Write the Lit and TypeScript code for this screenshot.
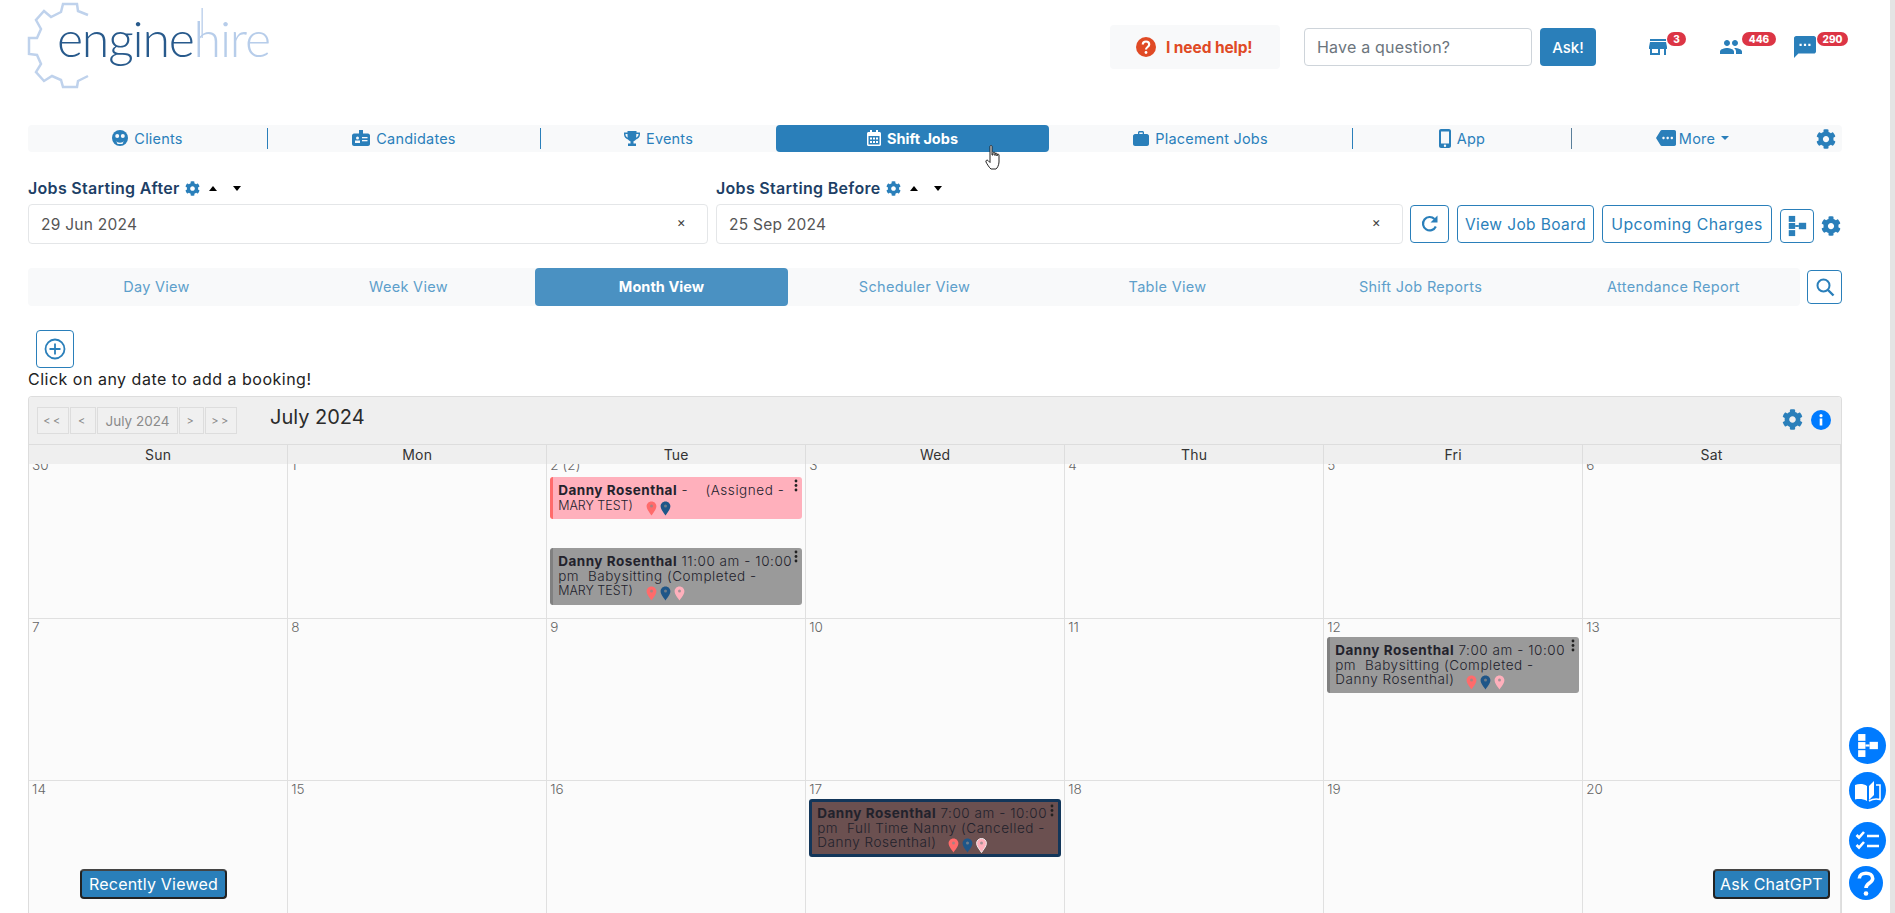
import { LitElement, html, css } from "lit";
import { customElement } from "lit/decorators.js";

const GEAR = "M487.4 315.7l-42.6-24.6c4.3-23.2 4.3-47 0-70.2l42.6-24.6c4.9-2.8 7.1-8.6 5.5-14-11.1-35.6-30-67.8-54.7-94.6-3.8-4.1-10-5.1-14.8-2.3L380.8 110c-17.9-15.4-38.5-27.3-60.8-35.1V25.8c0-5.6-3.9-10.5-9.4-11.7-36.7-8.2-74.3-7.8-109.2 0-5.5 1.2-9.4 6.1-9.4 11.7V75c-22.2 7.9-42.8 19.8-60.8 35.1L88.7 85.5c-4.9-2.8-11-1.9-14.8 2.3-24.7 26.7-43.6 58.9-54.7 94.6-1.7 5.4.6 11.2 5.5 14L67.3 221c-4.3 23.2-4.3 47 0 70.2l-42.6 24.6c-4.9 2.8-7.1 8.6-5.5 14 11.1 35.6 30 67.8 54.7 94.6 3.8 4.1 10 5.1 14.8 2.3l42.6-24.6c17.9 15.4 38.5 27.3 60.8 35.1v49.2c0 5.6 3.9 10.5 9.4 11.7 36.7 8.2 74.3 7.8 109.2 0 5.5-1.2 9.4-6.1 9.4-11.7v-49.2c22.2-7.9 42.8-19.8 60.8-35.1l42.6 24.6c4.9 2.8 11 1.9 14.8-2.3 24.7-26.7 43.6-58.9 54.7-94.6 1.5-5.5-.7-11.3-5.6-14.1zM256 336c-44.1 0-80-35.9-80-80s35.9-80 80-80 80 35.9 80 80-35.9 80-80 80z";

const gear = (s: number, c = "#2a7fba") => html`<svg width=${s} height=${s} viewBox="0 0 512 512"><path fill=${c} d=${GEAR}/></svg>`;

const tree = (s: number, c: string) => html`<svg width=${s} height=${s} viewBox="0 0 24 24"><g fill=${c}><rect x="3" y="1" width="7" height="6.5"/><rect x="3" y="8.7" width="7" height="6.5"/><rect x="3" y="16.5" width="7" height="6.5"/><rect x="10" y="11" width="4" height="2"/><rect x="14" y="8.5" width="8" height="7"/></g></svg>`;

const pin = (c: string, stroke = "none") => html`<svg class="pin" width="11" height="15" viewBox="0 0 11 15"><path fill=${c} stroke=${stroke} d="M5.5.5C2.6.5.6 2.7.6 5.3c0 3.3 3.5 6.8 4.9 9.3 1.4-2.5 4.9-6 4.9-9.3C10.4 2.7 8.4.5 5.5.5z"/><circle cx="5.5" cy="5" r="1.5" fill="#8a8a8a" fill-opacity=".75"/></svg>`;

const kebab = () => html`<svg class="kebab" width="4" height="13" viewBox="0 0 4 13"><g fill="#222"><circle cx="2" cy="2" r="1.4"/><circle cx="2" cy="6.5" r="1.4"/><circle cx="2" cy="11" r="1.4"/></g></svg>`;

const navIcons: Record<string, unknown> = {
  clients: html`<svg width="16" height="16" viewBox="0 0 16 16"><circle cx="8" cy="8" r="8" fill="#2a7fba"/><circle cx="5.2" cy="6" r="2" fill="#f8f9fa"/><circle cx="10.8" cy="6" r="2" fill="#f8f9fa"/><path d="M4 10.5c1 3 7 3 8 0l-1.5 3.5h-5z" fill="#f8f9fa"/></svg>`,
  candidates: html`<svg width="18" height="16" viewBox="0 0 18 16"><path fill="#2a7fba" d="M7 0h4v3.5h5c1 0 2 1 2 2V14c0 1-1 2-2 2H2c-1 0-2-1-2-2V5.5c0-1 1-2 2-2h5z"/><g fill="#f8f9fa"><circle cx="5.5" cy="8" r="1.5"/><rect x="3" y="10.5" width="5" height="2.5"/><rect x="10" y="7" width="5.5" height="1.3"/><rect x="10" y="10" width="5.5" height="1.3"/></g></svg>`,
  events: html`<svg width="16" height="15" viewBox="0 0 16 15"><path fill="#2a7fba" d="M3.5 0h9v1.5H16v2c0 2.5-2 4.5-4 5-.5.7-1.5 1.5-2.5 1.8V12.5H12V15H4v-2.5h2.5V10.3C5.5 10 4.5 9.2 4 8.5c-2-.5-4-2.5-4-5v-2h3.5zM1.5 3v.5c0 1.3.8 2.5 2.2 3.2C3.6 5.3 3.5 4 3.5 3zm13 0h-2.2c0 1-.1 2.3-.2 3.7 1.4-.7 2.4-1.9 2.4-3.2z"/></svg>`,
  shift: html`<svg width="14" height="16" viewBox="0 0 14 16"><path fill="#fff" fill-rule="evenodd" d="M3 0h2v2h4V0h2v2h1.5C13.3 2 14 2.7 14 3.5v11c0 .8-.7 1.5-1.5 1.5h-11C.7 16 0 15.3 0 14.5v-11C0 2.7.7 2 1.5 2H3zM1.5 6v8.5h11V6zM3 7.5h2v2H3zm3 0h2v2H6zm3 0h2v2H9zM3 11h2v2H3zm3 0h2v2H6zm3 0h2v2H9z"/></svg>`,
  placement: html`<svg width="16" height="15" viewBox="0 0 16 15"><path fill="#2a7fba" d="M5 1.5C5 .7 5.7 0 6.5 0h3c.8 0 1.5.7 1.5 1.5V3h3c1 0 2 1 2 2v8c0 1-1 2-2 2H2c-1 0-2-1-2-2V5c0-1 1-2 2-2h3zM6.3 1.5V3h3.4V1.5z"/></svg>`,
  app: html`<svg width="12" height="19" viewBox="0 0 12 19"><path fill="#2a7fba" fill-rule="evenodd" d="M2 0h8c1.1 0 2 .9 2 2v15c0 1.1-.9 2-2 2H2c-1.1 0-2-.9-2-2V2C0 .9.9 0 2 0zm0 2.5v12h8v-12zM6 15.5a1.2 1.2 0 100 2.4 1.2 1.2 0 000-2.4z"/></svg>`,
  more: html`<svg width="20" height="16" viewBox="0 0 24 19"><path fill="#2a7fba" d="M22 0H7C6.3 0 5.8.3 5.4.9L0 9.5l5.4 8.6c.4.6.9.9 1.6.9h15c1.1 0 2-.9 2-2V2c0-1.1-.9-2-2-2zM9 11c-.8 0-1.5-.7-1.5-1.5S8.2 8 9 8s1.5.7 1.5 1.5S9.8 11 9 11zm5 0c-.8 0-1.5-.7-1.5-1.5S13.2 8 14 8s1.5.7 1.5 1.5S14.8 11 14 11zm5 0c-.8 0-1.5-.7-1.5-1.5S18.2 8 19 8s1.5.7 1.5 1.5S19.8 11 19 11z"/></svg>`,
};

const caretUp = html`<span class="caret up"></span>`;
const caretDown = html`<span class="caret down"></span>`;

interface Ev { kind: string; time: string; l2: string; l3: string; pins: string[]; }

const line = (t: string) => (t.startsWith("MARY") ? html`<span class="caps">${t}</span>` : t);

@customElement("app-root")
export class AppRoot extends LitElement {
  static styles = css`
    :host { display: block; position: relative; width: 1895px; height: 913px; overflow: hidden; background: #fff; font-family: Inter, "Liberation Sans", sans-serif; color: #212529; }
    .scroll { position: absolute; right: 0; top: 0; bottom: 0; width: 5px; background: #e4e4e4; }
    .head { display: flex; height: 125px; }
    .logo { margin: 0; width: 280px; height: 92px; }
    .logo text { font-family: Lato, sans-serif; font-weight: 300; font-size: 50px; }
    .hr { display: flex; align-items: flex-start; margin-left: 830px; position: relative; }
    .help { display: flex; align-items: center; gap: 10px; width: 170px; height: 44px; margin-top: 25px; background: #f8f9fa; border-radius: 4px; padding-left: 26px; box-sizing: border-box; color: #e04a25; font-weight: 700; font-size: 15.5px; letter-spacing: -.1px; white-space: nowrap; }
    .q { margin: 28px 0 0 24px; width: 228px; height: 38px; box-sizing: border-box; border: 1px solid #ced4da; border-radius: 4px; padding-left: 12px; display: flex; align-items: center; font-size: 16px; color: #6c757d; letter-spacing: .2px; }
    .ask { margin: 28px 0 0 8px; width: 56px; height: 38px; background: #2a7fba; color: #fff; border-radius: 4px; display: flex; align-items: center; justify-content: center; font-size: 15px; font-weight: 500; }
    .ico { position: relative; margin-top: 37px; display: flex; align-items: center; height: 20px; }
    .ico1 { margin-left: 52px; width: 71px; }
    .ico2 { width: 75px; }
    .badge { position: absolute; top: -5px; height: 14px; background: #dc3545; color: #fff; font-size: 10px; font-weight: 800; border-radius: 8px; display: flex; align-items: center; justify-content: center; }
    .main { padding-left: 28px; width: 1814px; }
    .nav { display: flex; align-items: center; height: 27px; background: #f8f9fa; border-radius: 4px; font-size: 14.5px; color: #2a7fba; }
    .ni { display: flex; align-items: center; justify-content: center; gap: 6px; height: 100%; box-sizing: border-box; padding-bottom: 1px; letter-spacing: .2px; white-space: nowrap; }
    .ni svg { flex: none; }
    .ni.on { background: #2a7fba; color: #fff; font-weight: 700; border-radius: 4px; letter-spacing: 0; }
    .sep { width: 1px; height: 21px; background: #2a7fba; flex: none; }
    .navgear { display: flex; align-items: center; margin-left: 3px; }
    .dcaret { display: inline-block; width: 0; height: 0; border-left: 4px solid transparent; border-right: 4px solid transparent; border-top: 4.5px solid #2a7fba; margin-left: 3px; }
    .dates { display: flex; align-items: flex-end; margin-top: 23px; }
    .dcol { display: flex; flex-direction: column; gap: 3px; margin-right: 8px; }
    .lbl { display: flex; align-items: center; height: 26px; font-size: 16px; font-weight: 600; color: #1d3f66; gap: 5px; letter-spacing: .3px; white-space: nowrap; }
    .caret { display: inline-block; width: 0; height: 0; border-left: 4.5px solid transparent; border-right: 4.5px solid transparent; }
    .caret.up { border-bottom: 5px solid #000; margin-left: 4px; }
    .caret.down { border-top: 5px solid #000; margin-left: 11px; }
    .inp { position: relative; box-sizing: border-box; height: 40px; border: 1px solid #e4e6e8; border-radius: 4px; display: flex; align-items: center; padding-left: 12px; font-size: 15.5px; color: #555; letter-spacing: .25px; }
    .x { position: absolute; right: 21px; top: 9px; font-size: 13.5px; color: #444; }
    .ob { box-sizing: border-box; border: 1px solid #2a7fba; border-radius: 4px; color: #2a7fba; display: flex; align-items: center; justify-content: center; background: #fff; font-size: 15.5px; height: 38px; white-space: nowrap; letter-spacing: .4px; }
    .ob.wide { font-size: 15.8px; letter-spacing: .5px; }
    .bar { display: flex; align-items: flex-end; margin-bottom: 1px; }
    .tabsrow { display: flex; align-items: flex-start; margin-top: 24px; }
    .tabs { display: flex; width: 1772px; height: 38px; background: #f8f9fa; border-radius: 4px; font-size: 14.5px; color: #5d9fcb; }
    .tab { width: 253px; display: flex; align-items: center; justify-content: center; box-sizing: border-box; padding-bottom: 1px; letter-spacing: .3px; white-space: nowrap; }
    .tab:first-child { width: 254px; padding-left: 3px; }
    .tab.on { background: #4a91c2; color: #fff; font-weight: 700; border-radius: 4px; letter-spacing: .05px; }
    .add { margin: 24px 0 0 8px; width: 38px; height: 38px; }
    .hint { font-size: 16px; line-height: 23px; letter-spacing: .5px; color: #222; white-space: nowrap; }
    .cal { margin-top: 5px; border: 1px solid #ddd; border-bottom: none; border-radius: 4px 4px 0 0; width: 1814px; box-sizing: border-box; background: #fbfbfb; overflow: hidden; }
    .tb { height: 47px; background: #efefef; display: flex; align-items: flex-start; position: relative; z-index: 1; }
    .pg { display: flex; margin: 10px 0 0 8px; gap: 1px; }
    .pg div { box-sizing: border-box; height: 27px; border: 1px solid #ddd; display: flex; align-items: center; justify-content: center; font-size: 13.5px; color: #8a8a8a; background: #f0f0f0; white-space: nowrap; }
    .pg .ch { font-size: 11px; letter-spacing: 2.5px; }
    .title { font-size: 20px; color: #2b2b2b; margin: 7px 0 0 33px; line-height: 26px; letter-spacing: 0; }
    .tbr { margin: 12px 10px 0 auto; display: flex; align-items: center; gap: 8px; }
    .dow { display: grid; grid-template-columns: 259.2px 259px 259px 259px 259px 259px 257.8px; height: 20px; background: #efefef; border-top: 1px solid #ddd; box-sizing: border-box; position: relative; z-index: 1; font-size: 14px; color: #333; }
    .dow div { display: flex; align-items: center; justify-content: center; border-right: 1px solid #ddd; letter-spacing: .2px; }
    .grid { display: grid; grid-template-columns: 259.2px 259px 259px 259px 259px 259px 257.8px; grid-auto-rows: 162px; margin-top: -7px; }
    .cell { border-right: 1px solid #e0e0e0; border-bottom: 1px solid #e0e0e0; padding: 3px 2px 0 3px; box-sizing: border-box; min-width: 0; }
    .num { font-size: 13.5px; line-height: 13px; margin: -1px 0 2px; color: #666; font-weight: 300; letter-spacing: .1px; }
    .ev { position: relative; box-sizing: border-box; width: 252px; margin-top: 3px; padding: 6px 0 6px 5px; border-left: 3px solid; border-radius: 3px; font-size: 13.5px; line-height: 14.5px; font-weight: 300; color: #22222c; white-space: nowrap; letter-spacing: .55px; }
    .ev b { font-weight: 700; letter-spacing: .5px; }
    .caps { font-size: 12.5px; letter-spacing: 0; }
    .ev.assigned { background: #ffb0bc; border-color: #ff6b6b; }
    .ev.done { background: #9a9a9a; border-color: #808080; }
    .ev.cancel { background: #6b5050; border: 3px solid #12365a; padding: 4px 0 4px 5px; }
    .num + .ev.assigned { margin-top: 5px; }
    .ev + .ev { margin-top: 29px; }
    .pin { vertical-align: -2px; margin: -4px 0 -4px 3px; }
    .pins { margin-left: 9px; }
    .caps + .pins { margin-left: 10px; }
    .kebab { position: absolute; top: 2px; right: 4px; }
    .float { position: absolute; box-sizing: border-box; height: 30px; border: 2px solid #222; border-top-color: #444; border-radius: 4px; background: #2a7fba; color: #fff; display: flex; align-items: center; justify-content: center; font-size: 16px; letter-spacing: .2px; white-space: nowrap; }
    .fab { position: absolute; left: 1849px; width: 37px; height: 37px; border-radius: 50%; background: #007bff; display: flex; align-items: center; justify-content: center; }
    .cursor { position: absolute; left: 985px; top: 145px; }
  `;

  private ev(name: string, e: Ev) {
    return html`<div class="ev ${e.kind}"><b>${name}</b> ${e.time}<br />${line(e.l2)}${e.l3 ? html`<br />${line(e.l3)}` : ""}<span class="pins">${e.pins.map((c) => pin(c, e.kind === "cancel" && c === "#ffb0bc" ? "#eee" : "none"))}</span>${kebab()}</div>`;
  }

  render() {
    const R = "#ff6b6b", B = "#1f5688", P = "#ffb0bc";
    const nums = [["30","1","2 (2)","3","4","5","6"],["7","8","9","10","11","12","13"],["14","15","16","17","18","19","20"]];
    const events: Record<string, Ev[]> = {
      "2 (2)": [
        { kind: "assigned", time: " -\u00a0\u00a0\u00a0 (Assigned -", l2: "MARY TEST)", l3: "", pins: [R, B] },
        { kind: "done", time: "11:00 am - 10:00", l2: "pm\u00a0 Babysitting (Completed -", l3: "MARY TEST)", pins: [R, B, P] },
      ],
      "12": [{ kind: "done", time: "7:00 am - 10:00", l2: "pm\u00a0 Babysitting (Completed -", l3: "Danny Rosenthal)", pins: [R, B, P] }],
      "17": [{ kind: "cancel", time: "7:00 am - 10:00", l2: "pm\u00a0 Full Time Nanny (Cancelled -", l3: "Danny Rosenthal)", pins: [R, B, P] }],
    };
    return html`
      <div class="head">
        <svg class="logo" viewBox="0 0 280 92">
          <path fill="none" stroke="#bfd2ec" stroke-width="2.5" d="M88 15 L78 11 L77 4 L63 4 L61 12 L51 17 L44 11 L36 20 L41 29 L37 38 L29 38 L29 54 L37 55 L41 64 L36 72 L44 81 L52 76 L61 80 L63 87 L77 87 L78 81 L88 76"/>
          <text x="57" y="57" fill="#285a8c" textLength="214" lengthAdjust="spacing">engine<tspan fill="#b7cdea">hire</tspan></text>
          <rect x="201.5" y="8" width="1.3" height="30" fill="#b7cdea"/>
        </svg>
        <div class="hr">
          <div class="help">
            <svg width="20" height="20" viewBox="0 0 20 20"><circle cx="10" cy="10" r="10" fill="#e04a25"/><path fill="none" stroke="#fff" stroke-width="2.2" d="M6.8 7.5c0-4 6.4-4 6.4 0 0 2.5-3.2 2.5-3.2 5"/><circle cx="10" cy="15.5" r="1.4" fill="#fff"/></svg>
            I need help!
          </div>
          <div class="q">Have a question?</div>
          <div class="ask">Ask!</div>
          <div class="ico ico1"><svg width="20" height="20" viewBox="2 3 20 18"><path fill="#2a7fba" d="M20 4H4v2h16V4zm1 10v-2l-1-5H4l-1 5v2h1v6h10v-6h4v6h2v-6h1zm-9 4H6v-4h6v4z"/></svg><span class="badge" style="left:19px;width:19px">3</span></div>
          <div class="ico ico2"><svg width="24" height="24" viewBox="0 0 24 24"><path fill="#2a7fba" d="M16 11c1.66 0 2.99-1.34 2.99-3S17.66 5 16 5c-1.66 0-3 1.34-3 3s1.34 3 3 3zm-8 0c1.66 0 2.99-1.34 2.99-3S9.66 5 8 5C6.34 5 5 6.34 5 8s1.34 3 3 3zm0 2c-2.33 0-7 1.17-7 3.5V19h14v-2.5c0-2.33-4.67-3.5-7-3.5zm8 0c-.29 0-.62.02-.97.05 1.16.84 1.97 1.97 1.97 3.45V19h6v-2.5c0-2.33-4.67-3.5-7-3.5z"/></svg><span class="badge" style="left:23px;width:34px">446</span></div>
          <div class="ico"><svg width="22" height="22" viewBox="2 2 20 20"><path fill="#2a7fba" d="M20 2H4c-1.1 0-1.99.9-1.99 2L2 22l4-4h14c1.1 0 2-.9 2-2V4c0-1.1-.9-2-2-2zM9 11H7V9h2v2zm4 0h-2V9h2v2zm4 0h-2V9h2v2z"/></svg><span class="badge" style="left:23px;width:31px">290</span></div>
        </div>
      </div>

      <div class="main">
        <div class="nav">
          <div class="ni" style="width:239px">${navIcons.clients} Clients</div><div class="sep"></div>
          <div class="ni" style="width:272px">${navIcons.candidates} Candidates</div><div class="sep"></div>
          <div class="ni" style="width:235px">${navIcons.events} Events</div>
          <div class="ni on" style="width:273px">${navIcons.shift} Shift Jobs</div>
          <div class="ni" style="width:303px">${navIcons.placement} Placement Jobs</div><div class="sep"></div>
          <div class="ni" style="width:218px">${navIcons.app} App</div><div class="sep" style="background:#5a7f9a"></div>
          <div class="ni" style="width:241px;gap:3px">${navIcons.more} More<span class="dcaret"></span></div>
          <div class="navgear">${gear(20)}</div>
        </div>

        <div class="dates">
          <div class="dcol" style="width:680px">
            <div class="lbl">Jobs Starting After ${gear(15)}${caretUp}${caretDown}</div>
            <div class="inp">29 Jun 2024<span class="x">×</span></div>
          </div>
          <div class="dcol" style="width:687px;margin-right:7px">
            <div class="lbl">Jobs Starting Before ${gear(15)}${caretUp}${caretDown}</div>
            <div class="inp">25 Sep 2024<span class="x">×</span></div>
          </div>
          <div class="bar">
            <div class="ob" style="width:39px">
              <svg width="20" height="20" viewBox="0 0 20 20"><path fill="none" stroke="#2a7fba" stroke-width="2.2" d="M15.8 12.5A6.7 6.7 0 1 1 14.5 5"/><path fill="#2a7fba" d="M17.5 1.5v7h-7z"/></svg>
            </div>
            <div class="ob" style="width:137px;margin-left:8px">View Job Board</div>
            <div class="ob wide" style="width:170px;margin-left:8px">Upcoming Charges</div>
            <div class="ob" style="width:34px;height:34px;margin-left:8px">${tree(22, "#2a7fba")}</div>
            <div style="margin-left:7px;height:34px;display:flex;align-items:center">${gear(20)}</div>
          </div>
        </div>

        <div class="tabsrow">
          <div class="tabs">
            ${["Day View","Week View","Month View","Scheduler View","Table View","Shift Job Reports","Attendance Report"].map((t) => html`<div class="tab ${t === "Month View" ? "on" : ""}">${t}</div>`)}
          </div>
          <div class="ob" style="width:35px;height:34px;margin:2px 0 0 7px">
            <svg width="20" height="20" viewBox="0 0 20 20"><circle cx="8.5" cy="8.5" r="6" fill="none" stroke="#2a7fba" stroke-width="2"/><path stroke="#2a7fba" stroke-width="2.4" d="M13 13l5.5 5.5"/></svg>
          </div>
        </div>

        <div class="ob add">
          <svg width="22" height="22" viewBox="0 0 22 22"><circle cx="11" cy="11" r="9.5" fill="none" stroke="#2a7fba" stroke-width="1.8"/><path stroke="#2a7fba" stroke-width="1.8" d="M11 5.5v11M5.5 11h11"/></svg>
        </div>
        <div class="hint">Click on any date to add a booking!</div>

        <div class="cal">
          <div class="tb">
            <div class="pg">
              <div class="ch" style="width:32px">&lt;&lt;</div><div class="ch" style="width:26px">&lt;</div><div style="width:81px">July 2024</div><div class="ch" style="width:25px">&gt;</div><div class="ch" style="width:32px">&gt;&gt;</div>
            </div>
            <div class="title">July 2024</div>
            <div class="tbr">
              ${gear(21)}
              <svg width="20" height="20" viewBox="0 0 20 20"><circle cx="10" cy="10" r="10" fill="#007bff"/><rect x="8.7" y="8.5" width="2.6" height="7" fill="#fff"/><circle cx="10" cy="5.7" r="1.6" fill="#fff"/></svg>
            </div>
          </div>
          <div class="dow">${["Sun","Mon","Tue","Wed","Thu","Fri","Sat"].map((d) => html`<div>${d}</div>`)}</div>
          <div class="grid">
            ${nums.flat().map((n) => html`<div class="cell"><div class="num">${n}</div>${(events[n] || []).map((e) => this.ev("Danny Rosenthal", e))}</div>`)}
          </div>
        </div>
      </div>

      <div class="float" style="left:80px;top:869px;width:147px">Recently Viewed</div>
      <div class="float" style="left:1713px;top:869px;width:117px">Ask ChatGPT</div>

      <div class="fab" style="top:727px">${tree(25, "#fff")}</div>
      <div class="fab" style="top:772px">
        <svg width="27" height="24" viewBox="0 0 27 24"><path fill="#fff" d="M1 6c4-1.5 8.5-1.5 12 1v15c-3.5-2-8-2.5-12-1.5z"/><path fill="#fff" d="M15 7l5-5v14l-5 5z"/><path fill="none" stroke="#fff" stroke-width="1.6" d="M22 6h4v14.5c-3.5-1-7.5-.5-11 1.5"/></svg>
      </div>
      <div class="fab" style="top:822px">
        <svg width="25" height="22" viewBox="0 0 25 22"><path fill="none" stroke="#fff" stroke-width="2.6" d="M1.5 5l2.5 2.5L9 2M1.5 15l2.5 2.5L9 12"/><path stroke="#fff" stroke-width="2.6" d="M12 6h12M12 16h12"/></svg>
      </div>
      <div class="fab" style="top:866px;width:34px;height:34px">
        <svg width="18" height="25" viewBox="0 0 18 25"><path fill="none" stroke="#fff" stroke-width="3.6" d="M2.3 7.5c0-7 13.4-7 13.4 0 0 4.5-6.7 4.5-6.7 9.5"/><circle cx="9" cy="22.5" r="2.3" fill="#fff"/></svg>
      </div>

      <svg class="cursor" width="18" height="25" viewBox="0 0 18 25"><path fill="#fff" stroke="#222" stroke-width="1" d="M5 1.5c0-1.3 2-1.3 2 0V10l1 0V8c0-1.2 2-1.2 2 0v2.5V9c0-1.2 2-1.2 2 0v2V10c0-1.2 2-1.2 2 0v7c0 3-2 6.5-3 7H6c-1.5-1-4-5-5-7-.6-1.5 1-2.5 2-1.5l2 2z"/></svg>
      <div class="scroll"></div>
    `;
  }
}
